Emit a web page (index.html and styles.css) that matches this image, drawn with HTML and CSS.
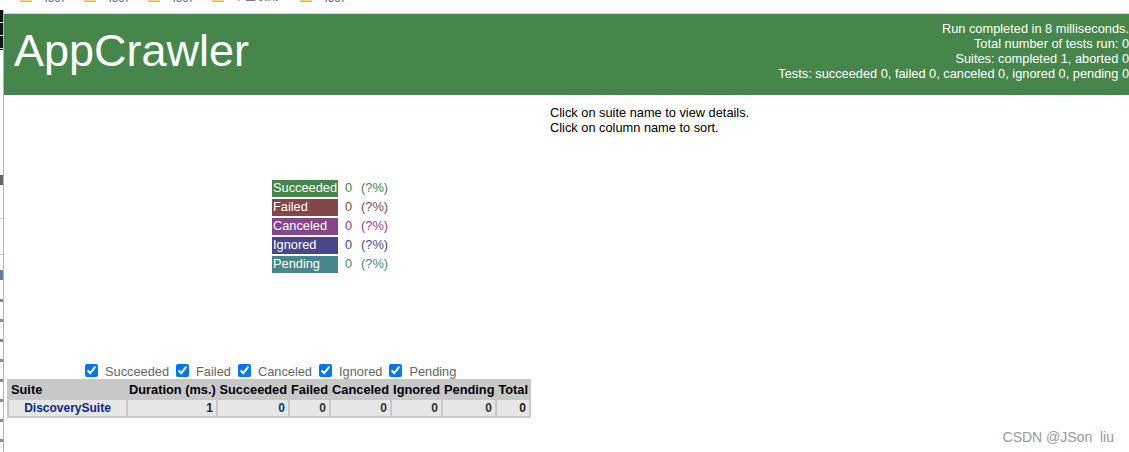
FILE: index.html
```html
<!DOCTYPE html>
<html lang="en">
<head>
  <meta charset="UTF-8" />
  <title>AppCrawler</title>
  <link rel="stylesheet" href="styles.css">
</head>
<body>

  <div class="bookmarks">
    <span class="mark mark-1"><i class="folder"></i><b>4567</b></span>
    <span class="mark mark-2"><i class="folder"></i><b>4567</b></span>
    <span class="mark mark-3"><i class="folder"></i><b>4567</b></span>
    <span class="mark mark-4"><i class="folder"></i><b>书签收藏</b></span>
    <span class="mark mark-5"><i class="folder"></i><b>4567</b></span>
  </div>

  <div class="page">
    <div class="edge"></div>

    <div class="report">
      <header class="summary">
        <h1>AppCrawler</h1>
        <div class="totals">
          <p>Run completed in 8 milliseconds.</p>
          <p>Total number of tests run: 0</p>
          <p>Suites: completed 1, aborted 0</p>
          <p>Tests: succeeded 0, failed 0, canceled 0, ignored 0, pending 0</p>
        </div>
      </header>

      <main class="content">
        <section class="left">
          <div class="legend">
            <div class="legend-row"><span class="label succeeded">Succeeded</span><span class="num c-succeeded">0</span><span class="pct c-succeeded">(?%)</span></div>
            <div class="legend-row"><span class="label failed">Failed</span><span class="num c-failed">0</span><span class="pct c-failed">(?%)</span></div>
            <div class="legend-row"><span class="label canceled">Canceled</span><span class="num c-canceled">0</span><span class="pct c-canceled">(?%)</span></div>
            <div class="legend-row"><span class="label ignored">Ignored</span><span class="num c-ignored">0</span><span class="pct c-ignored">(?%)</span></div>
            <div class="legend-row"><span class="label pending">Pending</span><span class="num c-pending">0</span><span class="pct c-pending">(?%)</span></div>
          </div>

          <div class="filters">
            <label><input type="checkbox" checked>Succeeded</label>
            <label><input type="checkbox" checked>Failed</label>
            <label><input type="checkbox" checked>Canceled</label>
            <label><input type="checkbox" checked>Ignored</label>
            <label><input type="checkbox" checked>Pending</label>
          </div>

          <table class="suites">
            <colgroup>
              <col class="col-suite"><col class="col-duration"><col class="col-succeeded"><col class="col-failed">
              <col class="col-canceled"><col class="col-ignored"><col class="col-pending"><col class="col-total">
            </colgroup>
            <thead>
              <tr>
                <th class="name">Suite</th><th>Duration (ms.)</th><th>Succeeded</th><th>Failed</th>
                <th>Canceled</th><th>Ignored</th><th>Pending</th><th>Total</th>
              </tr>
            </thead>
            <tbody>
              <tr>
                <td class="name"><a href="#">DiscoverySuite</a></td>
                <td class="dark">1</td><td class="blue">0</td><td>0</td><td>0</td><td>0</td><td>0</td><td class="dark">0</td>
              </tr>
            </tbody>
          </table>
        </section>

        <section class="help">
          <p>Click on suite name to view details.</p>
          <p>Click on column name to sort.</p>
        </section>
      </main>
    </div>
  </div>

  <div class="watermark">CSDN @JSon&nbsp;&nbsp;liu</div>

</body>
</html>
```

FILE: styles.css
```css
* { margin: 0; padding: 0; box-sizing: border-box; }

html, body {
  height: 452px;
  overflow: hidden;
}

body {
  font-family: "Liberation Sans", Arial, sans-serif;
  font-size: 12.8px;
  color: #000;
  background: #fff;
  position: relative;
}

.bookmarks {
  height: 14px;
  overflow: hidden;
  display: flex;
  border-bottom: 1px solid #d6d6d6;
}

.mark {
  display: flex;
  gap: 10px;
  font-family: "Liberation Sans", "Noto Sans CJK SC", sans-serif;
  font-size: 11px;
  line-height: 12px;
  color: #555;
  margin-top: -10px;
  height: 14px;
  flex: none;
}

.mark b {
  font-weight: normal;
  margin-top: 2px;
}

.mark-4 b { margin-top: 0; }

.mark-1 { margin-left: 20px; width: 64px; }
.mark-2 { width: 64px; }
.mark-3 { width: 64px; }
.mark-4 { width: 88px; }
.mark-5 { width: 60px; }

.folder {
  display: block;
  width: 12px;
  height: 12px;
  background: #f6d77f;
  border-bottom: 1px solid #e2b64f;
}

.page {
  display: flex;
  height: 438px;
}

/* sliver of the window behind, left of the browser */
.edge {
  width: 4px;
  height: 442px;
  margin-top: -4px;
  flex: none;
  border-right: 1px solid #b5b5b5;
  background:
    repeating-linear-gradient(#161616 0, #161616 12px, #ddd 12px, #ddd 13px) 0 0 / 3px 40px no-repeat,
    linear-gradient(#666, #666) 0 165px / 3px 10px no-repeat,
    linear-gradient(#ccc, #ccc) 0 208px / 3px 1px no-repeat,
    linear-gradient(#ccc, #ccc) 0 244px / 3px 1px no-repeat,
    linear-gradient(#5b7fa5, #5b7fa5) 0 260px / 3px 10px no-repeat,
    repeating-linear-gradient(#fff 0, #fff 17px, #8a8a8a 17px, #8a8a8a 20px) 0 272px / 3px 170px no-repeat,
    #fff;
}

.report {
  flex: 1;
  min-width: 0;
}

.summary {
  height: 81px;
  background: #47864a;
  color: #fff;
  display: flex;
  justify-content: space-between;
}

.summary h1 {
  font-size: 45px;
  font-weight: normal;
  line-height: 55px;
  margin: 9px 0 0 10px;
}

.totals {
  text-align: right;
  line-height: 15px;
  padding-top: 7px;
  white-space: nowrap;
}

.content {
  display: flex;
}

.left {
  width: 546px;
  flex: none;
  padding-left: 3px;
}

.legend {
  margin: 85px 0 0 265px;
  height: 182px;
}

.legend-row {
  display: flex;
  height: 19px;
  line-height: 16px;
}

.label {
  width: 66px;
  height: 17px;
  color: #fff;
  padding-left: 1px;
  flex: none;
}

.succeeded { background: #47864a; }
.failed { background: #85464a; }
.canceled { background: #85468a; }
.ignored { background: #47478a; }
.pending { background: #47868a; }

.num { width: 16px; margin-left: 7px; flex: none; }

.c-succeeded { color: #47864a; }
.c-failed { color: #85464a; }
.c-canceled { color: #85468a; }
.c-ignored { color: #47478a; }
.c-pending { color: #47868a; }

.filters {
  display: flex;
  gap: 7px;
  height: 18px;
  padding-left: 78px;
  line-height: 20px;
  color: #666;
  white-space: nowrap;
}

.filters label {
  display: flex;
  align-items: flex-start;
  gap: 7px;
}

.filters input {
  width: 13px;
  height: 13px;
  margin-top: 2px;
  accent-color: #0075ff;
}

.suites {
  border-collapse: separate;
  border-spacing: 2px;
  background: #c8c8c8;
  table-layout: fixed;
  width: 524px;
  margin-top: -1px;
}

.col-suite { width: 117px; }
.col-duration { width: 88px; }
.col-succeeded { width: 70px; }
.col-failed { width: 39px; }
.col-canceled { width: 59px; }
.col-ignored { width: 49px; }
.col-pending { width: 52px; }
.col-total { width: 32px; }

.suites th {
  font-weight: bold;
  height: 17px;
  line-height: 17px;
  text-align: right;
  white-space: nowrap;
  padding: 0 1px;
}

.suites th.name { text-align: left; padding-left: 2px; }

.suites td {
  background: #e6e6e6;
  height: 16px;
  line-height: 16px;
  font-size: 12px;
  font-weight: bold;
  text-align: right;
  padding: 0 3px;
  color: #333;
}

.suites td.name {
  text-align: center;
  color: #0a2a8c;
}

.suites td.name a {
  color: #0a2a8c;
  text-decoration: none;
}

.suites td.dark { color: #222; }
.suites td.blue { color: #0a3c78; }

.help {
  padding-top: 10px;
  line-height: 15px;
}

.watermark {
  position: absolute;
  right: 15px;
  bottom: 7px;
  font-size: 14px;
  line-height: 16px;
  color: #999;
}
```
